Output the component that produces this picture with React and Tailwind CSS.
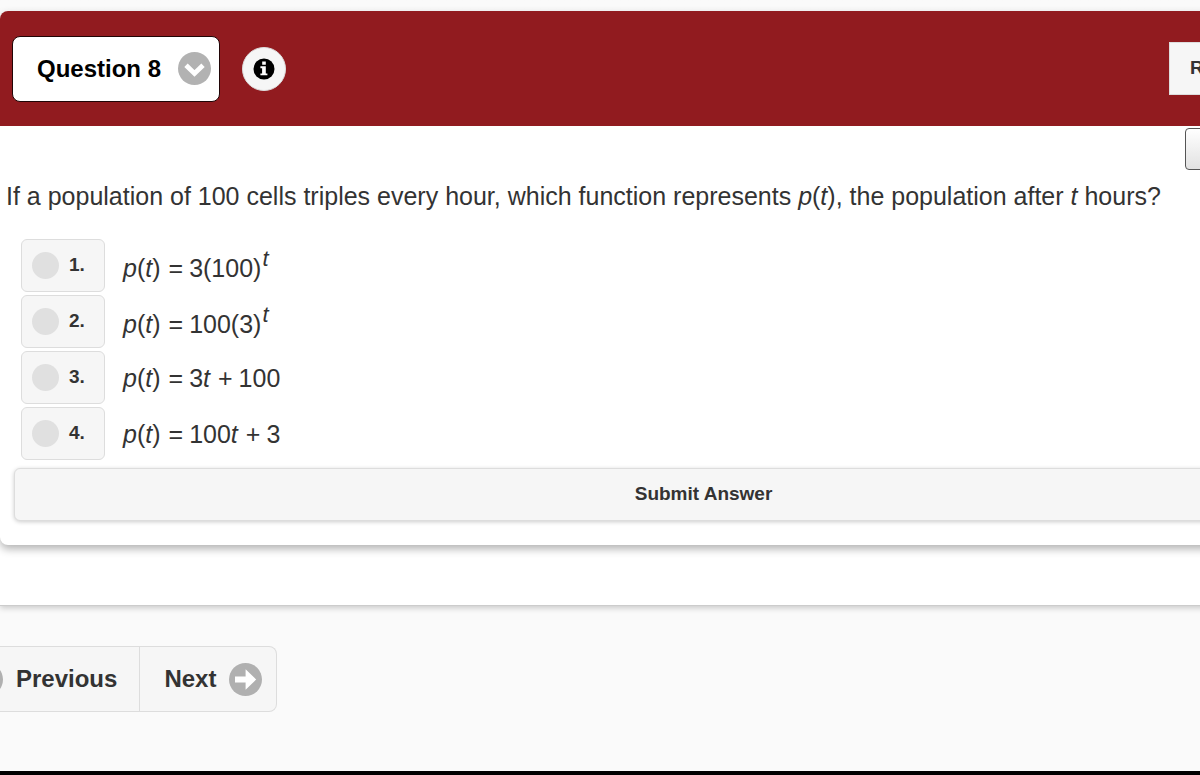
import React, { useState } from "react";

const Op = ({ children }) => <span className="ml-2 mr-1.5">{children}</span>;

const Fn = () => (
  <>
    <i>p</i>(<i>t</i>)
  </>
);

const options = [
  { id: 1, raised: true, body: <>3(100)<sup className="pl-px text-[22px]"><i>t</i></sup></> },
  { id: 2, raised: true, body: <>100(3)<sup className="pl-px text-[22px]"><i>t</i></sup></> },
  { id: 3, raised: false, body: <>3<i>t</i><Op>+</Op>100</> },
  { id: 4, raised: false, body: <>100<i>t</i><Op>+</Op>3</> },
];

const InfoIcon = () => (
  <svg viewBox="0 0 22 22" className="size-[22px]" aria-hidden="true">
    <circle cx="11" cy="11" r="10.5" fill="#000" />
    <path fill="#fff" d="M9.2 3.6h3.6v3.2H9.2zM7.4 8.2h5.4v7.2h1.6v1.9H7.4v-1.9H9.1v-5.2H7.4z" />
  </svg>
);

const ChevronIcon = () => (
  <svg viewBox="0 0 33 33" className="size-[33px]" aria-hidden="true">
    <circle cx="16.5" cy="16.5" r="16.5" fill="#b2b2b2" />
    <path d="M8 13.2l8.5 8.3 8.5-8.3" fill="none" stroke="#fff" strokeWidth="4.8" />
  </svg>
);

const ArrowIcon = ({ className }) => (
  <svg viewBox="0 0 33 33" className={className} aria-hidden="true">
    <circle cx="16.5" cy="16.5" r="16.5" fill="#b0b0b0" />
    <path fill="#fff" d="M6 13.4h10.6V6.3L27.2 16.5 16.6 26.7v-7.1H6z" />
  </svg>
);

const Header = () => (
  <header className="flex items-center justify-between rounded-t-lg bg-[#911b1f] h-[115px] pl-3 pr-[14px]">
    <div className="flex items-center gap-[22px]">
      <button className="flex items-center gap-[17px] h-[66px] pl-6 pr-2 rounded-lg border border-[#200506] bg-white text-black text-2xl font-bold">
        Question 8
        <ChevronIcon />
      </button>
      <button aria-label="Info" className="flex items-center justify-center size-[44px] rounded-full border border-[#ddd] bg-[#f6f6f6]">
        <InfoIcon />
      </button>
    </div>
    <button className="w-56 h-[53px] pl-5 border border-[#ddd] bg-[#f6f6f6] text-left text-[19px] font-bold">R</button>
  </header>
);

export default function App() {
  const [answer, setAnswer] = useState(null);

  return (
    <div className="min-h-screen overflow-hidden flex flex-col bg-[#fafafa] text-[#333] font-['Liberation_Sans',Arial,sans-serif]">
      {/* the question sheet is wider than the window and runs off its right side */}
      <main className="w-[calc(100%+207px)] pt-[11px] pb-[60px] bg-linear-to-b from-[#fafafa] from-5% to-white to-5% border-b border-[#ccc] shadow-[0_2px_6px_rgba(0,0,0,0.2)]">
        <section className="rounded-lg bg-white shadow-[0_4px_8px_rgba(0,0,0,0.3)]">
          <Header />

          <div className="flex justify-end pt-[2px] pr-[14px]">
            <button aria-label="Tools" className="w-52 h-[42px] rounded-sm border border-[#555] bg-linear-to-b from-white to-[#e2e2e2]"></button>
          </div>

          <form onSubmit={(e) => e.preventDefault()} className="pb-6">
            <p className="pl-[6px] pt-2 text-[25px] leading-9">
              If a population of 100 cells triples every hour, which function represents <Fn />, the population after <i>t</i> hours?
            </p>

            <ul className="flex flex-col gap-[3px] mt-[25px] pl-[21px]">
              {options.map((o) => (
                <li key={o.id} className="flex items-center gap-[18px]">
                  <label htmlFor={`choice-${o.id}`} className="flex items-center gap-[10px] w-[84px] h-[53px] pl-[10px] rounded-md border border-[#ddd] bg-[#f6f6f6] text-[19px] font-bold">
                    <input
                      id={`choice-${o.id}`}
                      type="radio"
                      name="choice"
                      checked={answer === o.id}
                      onChange={() => setAnswer(o.id)}
                      className="appearance-none size-[27px] rounded-full bg-[#e0e0e0] checked:bg-[#38c]"
                    />
                    {o.id}.
                  </label>
                  <span className={o.raised ? "text-[25px] leading-9 pt-1" : "text-[25px] leading-9"}>
                    <Fn /><Op>=</Op>{o.body}
                  </span>
                </li>
              ))}
            </ul>

            <div className="px-[14px] pt-2">
              <button type="submit" className="w-full h-[53px] rounded-md border border-[#ddd] bg-[#f6f6f6] text-[19px] font-bold shadow-[0_1px_4px_rgba(0,0,0,0.2)]">
                Submit Answer
              </button>
            </div>
          </form>
        </section>
      </main>

      <nav className="flex mt-10 mb-10 -ml-[45px] text-2xl font-bold">
        <button className="flex items-center gap-[13px] h-[66px] pl-[14px] pr-[22px] border border-[#ddd] bg-[#f6f6f6]">
          <ArrowIcon className="size-[33px] rotate-180" />
          Previous
        </button>
        <button className="flex items-center gap-[13px] h-[66px] pl-6 pr-[14px] border border-l-0 border-[#ddd] rounded-r-lg bg-[#f6f6f6]">
          Next
          <ArrowIcon className="size-[33px]" />
        </button>
      </nav>

      <div className="mt-auto h-1 bg-black"></div>
    </div>
  );
}
